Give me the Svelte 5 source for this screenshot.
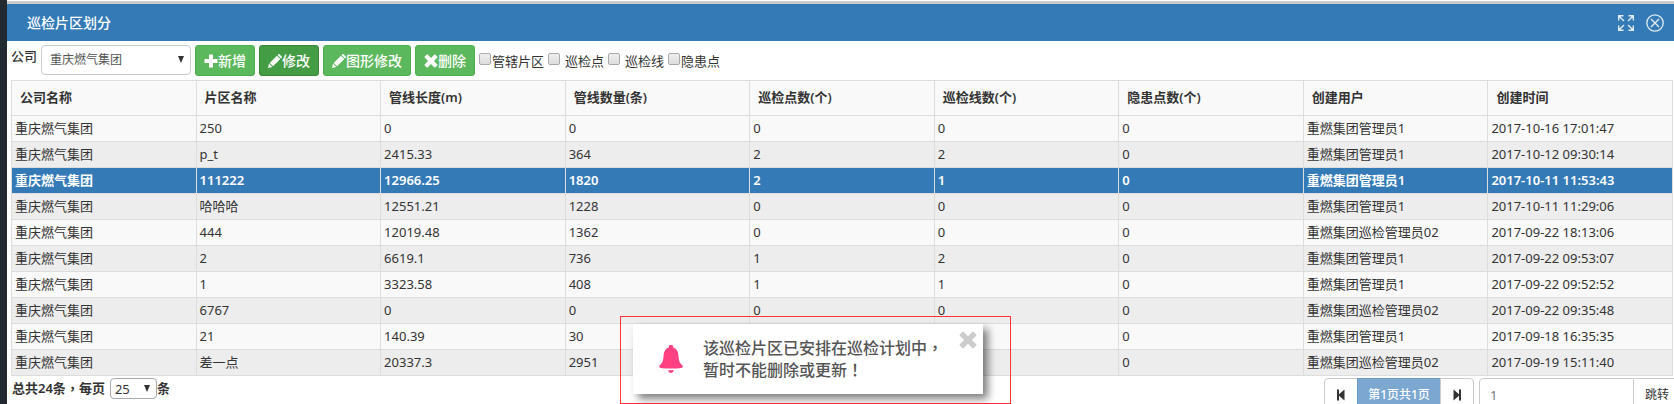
<script>
  const columns = ['公司名称', '片区名称', '管线长度(m)', '管线数量(条)', '巡检点数(个)', '巡检线数(个)', '隐患点数(个)', '创建用户', '创建时间'];
  const company = '重庆燃气集团';
  const rows = [
    [company, '250', '0', '0', '0', '0', '0', '重燃集团管理员1', '2017-10-16 17:01:47'],
    [company, 'p_t', '2415.33', '364', '2', '2', '0', '重燃集团管理员1', '2017-10-12 09:30:14'],
    [company, '111222', '12966.25', '1820', '2', '1', '0', '重燃集团管理员1', '2017-10-11 11:53:43'],
    [company, '哈哈哈', '12551.21', '1228', '0', '0', '0', '重燃集团管理员1', '2017-10-11 11:29:06'],
    [company, '444', '12019.48', '1362', '0', '0', '0', '重燃集团巡检管理员02', '2017-09-22 18:13:06'],
    [company, '2', '6619.1', '736', '1', '2', '0', '重燃集团管理员1', '2017-09-22 09:53:07'],
    [company, '1', '3323.58', '408', '1', '1', '0', '重燃集团管理员1', '2017-09-22 09:52:52'],
    [company, '6767', '0', '0', '0', '0', '0', '重燃集团巡检管理员02', '2017-09-22 09:35:48'],
    [company, '21', '140.39', '30', '0', '0', '0', '重燃集团管理员1', '2017-09-18 16:35:35'],
    [company, '差一点', '20337.3', '2951', '0', '0', '0', '重燃集团巡检管理员02', '2017-09-19 15:11:40']
  ];
  let selected = $state(2);
  let toastOpen = $state(true);
</script>

{#snippet pencil()}
  <svg class="icon" viewBox="0 0 14 14" aria-hidden="true"><path d="M0 14l1-4.400L4.400 13zM1.700 8.900L8.900 1.700l3.400 3.400-7.200 7.200zM9.600 1L10.300.3q.6-.6 1.200 0l2.200 2.200q.6.6 0 1.200L13 4.400z" /></svg>
{/snippet}

{#snippet cross()}
  <svg class="icon" viewBox="0 0 14 14" aria-hidden="true"><path d="M3.600.6L7 4 10.400.6q.4-.4.8 0l2.200 2.200q.4.4 0 .8L10 7l3.400 3.400q.4.4 0 .8l-2.200 2.200q-.4.4-.8 0L7 10l-3.400 3.400q-.4.4-.8 0L.6 11.200q-.4-.4 0-.8L4 7 .6 3.600q-.4-.4 0-.8L2.800.6q.4-.4.8 0z" /></svg>
{/snippet}

<div class="page">
  <main>
    <header>
      <h1>巡检片区划分</h1>
      <button class="tool" aria-label="全屏">
        <svg width="16" height="16" viewBox="0 0 16 16" aria-hidden="true"><path d="M.7 5.500V.7h4.800M.7.7l5.300 5.300M10.500.7h4.800v4.800M15.300.7L10 6M.7 10.500v4.800h4.800M.7 15.300L6 10M10.500 15.300h4.800v-4.800M15.300 15.300L10 10" fill="none" stroke="currentColor" stroke-width="1.400" /></svg>
      </button>
      <button class="tool" aria-label="关闭">
        <svg width="18" height="18" viewBox="0 0 18 18" aria-hidden="true"><circle cx="9" cy="9" r="8.200" fill="none" stroke="currentColor" stroke-width="1.300" /><path d="M5 5l8 8M13 5l-8 8" stroke="currentColor" stroke-width="1.400" /></svg>
      </button>
    </header>

    <form class="toolbar" onsubmit={(e) => e.preventDefault()}>
      <label class="caption" for="company">公司</label>
      <span class="select wide">
        <select id="company"><option>重庆燃气集团</option></select>
      </span>
      <button class="btn"><svg class="icon" viewBox="0 0 14 14" aria-hidden="true"><path d="M5.500.5h3q.5 0 .5.5v4h4q.5 0 .5.5v3q0 .5-.5.5H9v4q0 .5-.5.5h-3q-.5 0-.5-.5V9H1q-.5 0-.5-.5v-3Q.5 5 1 5h4V1q0-.5.5-.5z" /></svg>新增</button>
      <button class="btn active">{@render pencil()}修改</button>
      <button class="btn">{@render pencil()}图形修改</button>
      <button class="btn">{@render cross()}删除</button>
      <div class="checks">
        <label><input type="checkbox" />管辖片区</label>
        <label class="spaced"><input type="checkbox" />巡检点</label>
        <label class="spaced"><input type="checkbox" />巡检线</label>
        <label><input type="checkbox" />隐患点</label>
      </div>
    </form>

    <div class="grid">
      <table>
        <thead>
          <tr>{#each columns as column}<th scope="col">{column}</th>{/each}</tr>
        </thead>
        <tbody>
          {#each rows as row, i}
            <tr class:selected={selected === i} onclick={() => (selected = i)}>
              {#each row as cell}<td>{cell}</td>{/each}
            </tr>
          {/each}
        </tbody>
      </table>
    </div>

    <footer>
      <div class="summary">
        <label for="size">总共24条<span class="mark">，</span>每页</label>
        <span class="select small">
          <select id="size"><option>25</option></select>
        </span>
        <span>条</span>
      </div>
      <nav aria-label="分页">
        <button aria-label="首页"><svg width="8" height="12" viewBox="0 0 8 12" aria-hidden="true"><path d="M0 .5h2v4.800L7.500.5v11L2 6.700v4.800H0z" /></svg></button>
        <button class="current">第1页共1页</button>
        <button aria-label="末页"><svg width="8" height="12" viewBox="0 0 8 12" aria-hidden="true"><path d="M8 .5H6v4.800L.5.5v11L6 6.700v4.800h2z" /></svg></button>
      </nav>
      <div class="jump">
        <input type="text" value="1" aria-label="页码" />
        <button>跳转</button>
      </div>
    </footer>
  </main>

  {#if toastOpen}
    <div class="frame">
      <div class="toast" role="alert">
        <svg width="26" height="28" viewBox="0 0 26 28" aria-hidden="true"><path d="M10.800 2.500V1.200Q10.800 0 13 0t2.200 1.200v1.300Q20 4 20.400 10.500q.3 6 2.400 8.300 2.200 2 2.200 3.200Q24 23.500 13 23.500T1 22q0-1.200 2.200-3.200 2.100-2.300 2.400-8.300Q6 4 10.800 2.500zM10.300 25q2.700.3 5.400 0-.4 3-2.700 3t-2.700-3z" /></svg>
        <p>该巡检片区已安排在巡检计划中<span class="mark">，</span><br />暂时不能删除或更新<span class="mark">！</span></p>
        <button aria-label="关闭提示" onclick={() => (toastOpen = false)}>{@render cross()}</button>
      </div>
    </div>
  {/if}
</div>

<style>
  :global(body) {
    margin: 0;
    overflow: hidden;
  }
  * {
    box-sizing: border-box;
  }
  .page {
    position: relative;
    height: 100vh;
    padding-left: 7px;
    overflow: hidden;
    background: #222930;
    color: #333;
    font: 13px/20px 'Noto Sans', 'Noto Sans CJK SC', sans-serif;
  }
  main {
    display: flex;
    flex-direction: column;
    height: 100%;
    border-top: 1px solid #fff;
    background: #fff;
  }
  button,
  input,
  select {
    margin: 0;
    font: inherit;
    color: inherit;
  }
  /* Full-width punctuation centred in its em box */
  .mark {
    font-family: 'Noto Sans CJK TC', sans-serif;
    line-height: 1;
  }
  header {
    display: flex;
    flex: none;
    align-items: center;
    gap: 12px;
    height: 40px;
    padding: 0 10px 0 20px;
    border-top: 3px solid #ccc;
    background: #337ab7;
    color: #fff;
  }
  h1 {
    flex: 1;
    margin: 0;
    font-size: 14px;
    font-weight: 500;
  }
  .tool {
    display: flex;
    padding: 0;
    border: 0;
    background: none;
    opacity: 0.85;
  }
  .toolbar {
    display: flex;
    flex: none;
    align-items: flex-start;
    gap: 4px;
    height: 39px;
    padding: 4px 4px 0;
  }
  .caption {
    width: 26px;
    margin-top: 1px;
    font-weight: 500;
    white-space: nowrap;
  }
  .select {
    position: relative;
    display: block;
  }
  .select::after {
    content: '';
    position: absolute;
    right: 7px;
    top: 50%;
    margin-top: -4px;
    border: solid transparent;
    border-width: 7px 3px 0;
    border-top-color: #333;
    pointer-events: none;
  }
  select {
    display: block;
    width: 100%;
    height: 100%;
    border: 1px solid #ccc;
    border-radius: 4px;
    background: #fff;
    appearance: none;
  }
  .wide {
    width: 150px;
    height: 30px;
  }
  .wide select {
    padding: 0 8px;
    color: #555;
    font-size: 12px;
  }
  .btn {
    display: flex;
    align-items: center;
    height: 31px;
    padding: 1px 8px 0;
    border: 1px solid #4cae4c;
    border-radius: 3px;
    background: #5cb85c;
    color: #fff;
    font-size: 14px;
    font-weight: 500;
    white-space: nowrap;
  }
  .active {
    border-color: #398439;
    background: #449d44;
  }
  .icon {
    width: 14px;
    height: 14px;
    fill: currentColor;
  }
  .checks {
    display: flex;
    gap: 4px;
    padding-top: 6px;
    white-space: nowrap;
  }
  .checks label {
    display: flex;
    align-items: flex-start;
    gap: 1px;
  }
  .checks .spaced {
    gap: 5px;
  }
  .checks input {
    width: 12px;
    height: 12px;
    margin-top: 2px;
    border: 1px solid #aaa;
    border-radius: 2px;
    background: linear-gradient(#eee, #ddd);
    appearance: none;
  }
  .checks input:checked {
    background: #337ab7;
  }
  .grid {
    flex: 1;
    min-height: 0;
    padding: 0 1px 0 4px;
    overflow: hidden;
  }
  table {
    width: 100%;
    border-collapse: collapse;
    table-layout: fixed;
  }
  th,
  td {
    height: 26px;
    padding: 0 3px 2px;
    border: 1px solid #ddd;
    overflow: hidden;
    text-align: left;
    white-space: nowrap;
  }
  th {
    height: 35px;
    padding: 0 8px 2px;
    background: #f9f9f9;
    font-weight: 600;
  }
  tbody tr:nth-child(odd) {
    background: #f9f9f9;
  }
  tbody tr:nth-child(even) {
    background: #ededed;
  }
  tbody tr.selected {
    background: #337ab7;
    color: #fff;
    font-weight: 600;
  }
  footer {
    display: flex;
    flex: none;
    align-items: flex-start;
    height: 27px;
    padding: 1px 0 0 5px;
    overflow: hidden;
    white-space: nowrap;
  }
  .summary {
    display: flex;
    flex: 1;
    font-weight: 600;
  }
  .small {
    width: 47px;
    height: 21px;
    margin-left: 5px;
    font-weight: 400;
  }
  .small select {
    padding: 0 4px;
    border-color: #a9a9a9;
  }
  nav,
  .jump {
    display: flex;
    height: 34px;
  }
  nav button,
  .jump > * {
    display: flex;
    align-items: center;
    justify-content: center;
    border: 1px solid #ccc;
    background: #fff;
  }
  nav button {
    width: 34px;
    padding: 0;
    fill: #333;
  }
  nav button:first-child {
    border-radius: 4px 0 0 4px;
  }
  nav button:last-child {
    border-radius: 0 4px 4px 0;
  }
  nav .current {
    width: 84px;
    margin: 0 -1px;
    border-color: #6d9dc7;
    background: #7ba7d0;
    color: #fff;
    font-size: 12px;
    font-weight: 500;
  }
  .jump {
    margin-left: 5px;
  }
  .jump input {
    width: 155px;
    padding: 0 10px;
    border-radius: 4px 0 0 4px;
    color: #777;
  }
  .jump button {
    width: 40px;
    padding: 0 0 0 6px;
    border-width: 1px 0;
    font-size: 12px;
  }
  .frame {
    position: absolute;
    left: 620px;
    bottom: 0;
    width: 391px;
    padding: 7px 27px 9px 12px;
    border: 1px solid #f33;
  }
  .toast {
    display: flex;
    align-items: center;
    height: 70px;
    padding: 0 6px 0 25px;
    background: #fff;
    box-shadow: 5px 5px 8px rgba(0, 0, 0, 0.5);
    color: #555;
    fill: #ff4081;
  }
  .toast p {
    flex: 1;
    margin: 0 0 0 19px;
    font-size: 16px;
    font-weight: 500;
    line-height: 22px;
    white-space: nowrap;
  }
  .toast button {
    align-self: flex-start;
    margin-top: 7px;
    padding: 0;
    border: 0;
    background: none;
    color: #ccc;
  }
  .toast .icon {
    display: block;
    width: 18px;
    height: 18px;
  }
</style>
